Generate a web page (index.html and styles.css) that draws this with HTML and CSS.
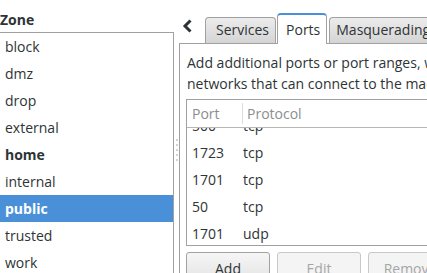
FILE: index.html
```html
<!DOCTYPE html>
<html lang="en">
<head>
  <meta charset="UTF-8" />
  <meta name="viewport" content="width=device-width, initial-scale=1.0"/>
  <title>Firewall Configuration</title>
  <link rel="stylesheet" href="styles.css">
</head>
<body>
  <div class="window">
    <div class="zones">
      <div class="zones-title">Zone</div>
      <ul class="zone-list">
        <li>block</li>
        <li>dmz</li>
        <li>drop</li>
        <li>external</li>
        <li class="active">home</li>
        <li>internal</li>
        <li class="selected">public</li>
        <li>trusted</li>
        <li>work</li>
      </ul>
    </div>

    <div class="handle">
      <span></span><span></span><span></span><span></span><span></span>
    </div>

    <div class="settings">
      <div class="tabbar">
        <button class="back">
          <svg width="11" height="14" viewBox="0 0 11 14">
            <polyline points="8.5,1.5 3,7 8.5,12.5" fill="none" stroke="#2e3436" stroke-width="3"/>
          </svg>
        </button>
        <div class="tab">Services</div>
        <div class="tab current">Ports</div>
        <div class="tab last">Masquerading</div>
      </div>

      <div class="page">
        <p class="hint">Add additional ports or port ranges, which need to be accessible for all hosts or<br>networks that can connect to the machine.</p>

        <div class="tree">
          <div class="tree-head">
            <div class="col-port">Port</div>
            <div class="col-proto">Protocol</div>
          </div>
          <div class="tree-body">
            <div class="row first"><div class="col-port">500</div><div class="col-proto">tcp</div></div>
            <div class="row"><div class="col-port">1723</div><div class="col-proto">tcp</div></div>
            <div class="row"><div class="col-port">1701</div><div class="col-proto">tcp</div></div>
            <div class="row"><div class="col-port">50</div><div class="col-proto">tcp</div></div>
            <div class="row"><div class="col-port">1701</div><div class="col-proto">udp</div></div>
          </div>
        </div>

        <div class="actions">
          <button class="btn">Add</button>
          <button class="btn" disabled>Edit</button>
          <button class="btn" disabled>Remove</button>
        </div>
      </div>
    </div>
  </div>
</body>
</html>
```

FILE: styles.css
```css
body {
  margin: 0;
  font-family: 'Open Sans', 'DejaVu Sans', sans-serif;
  font-size: 14px;
  color: #2e3436;
  background-color: #ffffff;
  overflow: hidden;
}

.window {
  display: flex;
  width: 427px;
  height: 273px;
  overflow: hidden;
}

/* zone list */
.zones {
  flex: none;
  width: 174px;
}

.zones-title {
  height: 32px;
  line-height: 40px;
  font-weight: bold;
}

.zone-list {
  list-style: none;
  margin: 0 0 0 -1px;
  padding: 0;
  border: 1px solid #a1a1a1;
  height: 260px;
  background-color: white;
}

.zone-list li {
  height: 27px;
  line-height: 27px;
  padding-left: 5px;
}

.zone-list li.active {
  font-weight: bold;
}

.zone-list li.selected {
  background-color: #4a90d9;
  color: white;
  font-weight: bold;
}

/* pane separator */
.handle {
  flex: none;
  width: 5px;
  display: flex;
  flex-direction: column;
  align-items: center;
  padding-top: 139px;
  gap: 3px;
}

.handle span {
  width: 2px;
  height: 2px;
  border-radius: 1px;
  background-color: #c4c4c4;
}

/* right side */
.settings {
  flex: none;
  width: 400px;
}

.tabbar {
  display: flex;
  align-items: flex-end;
  height: 43px;
  position: relative;
  z-index: 1;
}

.back {
  align-self: flex-start;
  margin: 19px 11px 0 2px;
  padding: 0;
  border: none;
  background: none;
  width: 13px;
  height: 14px;
}

.tab {
  height: 25px;
  line-height: 24px;
  padding: 0 6px 0 10px;
  margin-right: 1px;
  border: 1px solid #a1a1a1;
  border-bottom: none;
  border-radius: 4px 4px 0 0;
  background: linear-gradient(#ececec, #d4d4d4);
}

.tab.current {
  height: 29px;
  line-height: 30px;
  padding: 0 6px 0 8px;
  margin-right: 2px;
  margin-bottom: -1px;
  background: white;
  border-top: 2px solid #4a90d9;
}

.tab.last {
  padding-left: 6px;
}

.page {
  border: 1px solid #a1a1a1;
  border-right: none;
  height: 240px;
  padding: 0 0 0 6px;
  background-color: white;
}

.hint {
  margin: 0;
  padding: 8px 0 0 1px;
  line-height: 21px;
  white-space: nowrap;
}

.tree {
  margin-top: 5px;
  border: 1px solid #a1a1a1;
  border-right: none;
}

.tree-head {
  display: flex;
  height: 27px;
  line-height: 27px;
  color: #8b8e8f;
  border-bottom: 1px solid #b6b6b3;
}

.tree-head .col-port {
  border-right: 1px solid #dcdcdc;
  margin: 3px 0;
  line-height: 21px;
}

.tree-head .col-proto {
  padding-left: 4px;
}

.col-port {
  width: 50px;
  padding-left: 5px;
}

.tree-body {
  height: 117px;
  overflow: hidden;
}

.row {
  display: flex;
  height: 27px;
  line-height: 27px;
}

.row.first {
  margin-top: -16px;
}

.row .col-proto {
  padding-left: 1px;
}

.actions {
  display: flex;
  gap: 7px;
  margin-top: 6px;
}

.btn {
  font-family: inherit;
  font-size: 14px;
  color: #2e3436;
  width: 84px;
  height: 32px;
  padding: 0;
  border: 1px solid #a1a1a1;
  border-radius: 3px;
  background: linear-gradient(#f6f6f6, #e2e2e2);
}

.btn:disabled {
  color: #a4a7a7;
  border-color: #c8c8c8;
  background: #f4f4f4;
}
```
